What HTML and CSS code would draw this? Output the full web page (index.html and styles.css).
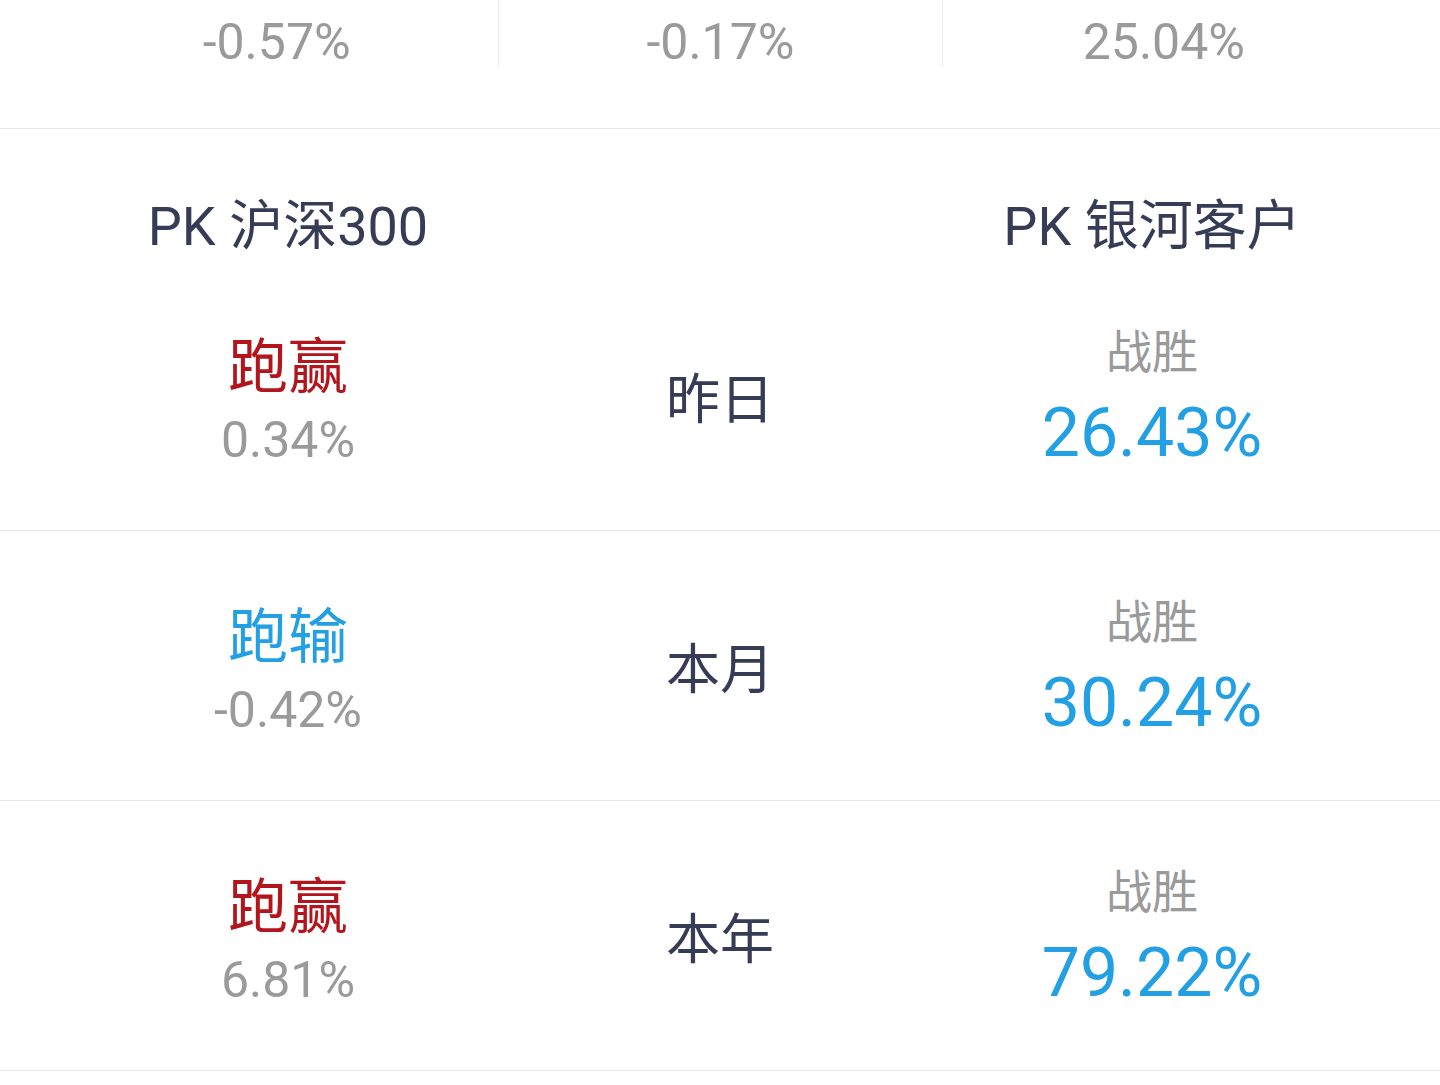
FILE: index.html
```html
<!DOCTYPE html>
<html lang="zh-CN">
<head>
<meta charset="utf-8">
<link rel="stylesheet" href="styles.css">
</head>
<body>
<div class="page">
  <section class="summary">
    <div class="summary-row">
      <div class="summary-cell">-0.57%</div>
      <div class="summary-cell">-0.17%</div>
      <div class="summary-cell">25.04%</div>
    </div>
  </section>

  <section class="pk">
    <div class="pk-head">
      <div class="col">PK 沪深300</div>
      <div class="col"></div>
      <div class="col">PK 银河客户</div>
    </div>

    <div class="pk-row">
      <div class="col index-side">
        <div class="result win">跑赢</div>
        <div class="diff">0.34%</div>
      </div>
      <div class="col period">昨日</div>
      <div class="col client-side">
        <div class="beat-label">战胜</div>
        <div class="beat-value">26.43%</div>
      </div>
    </div>

    <div class="pk-row">
      <div class="col index-side">
        <div class="result lose">跑输</div>
        <div class="diff">-0.42%</div>
      </div>
      <div class="col period">本月</div>
      <div class="col client-side">
        <div class="beat-label">战胜</div>
        <div class="beat-value">30.24%</div>
      </div>
    </div>

    <div class="pk-row">
      <div class="col index-side">
        <div class="result win">跑赢</div>
        <div class="diff">6.81%</div>
      </div>
      <div class="col period">本年</div>
      <div class="col client-side">
        <div class="beat-label">战胜</div>
        <div class="beat-value">79.22%</div>
      </div>
    </div>
  </section>
</div>
</body>
</html>
```

FILE: styles.css
```css
html, body {
  margin: 0;
  padding: 0;
  background: #ffffff;
}

body {
  font-family: Roboto, "Noto Sans CJK SC", sans-serif;
  width: 1440px;
  height: 1085px;
  overflow: hidden;
}

.summary {
  height: 128px;
  border-bottom: 1px solid #e6e6e6;
  padding: 0 55px;
}

.summary-row {
  display: grid;
  grid-template-columns: repeat(3, 1fr);
}

.summary-cell {
  height: 67px;
  box-sizing: border-box;
  padding-top: 16px;
  line-height: 52px;
  font-size: 50px;
  color: #9a9a9a;
  text-align: center;
}

.summary-cell + .summary-cell {
  border-left: 1px solid #ececec;
}

.pk-head,
.pk-row {
  display: grid;
  grid-template-columns: 576px 288px 576px;
}

.pk-head {
  height: 132px;
  box-sizing: border-box;
  padding-top: 68px;
}

.pk-head .col {
  line-height: 60px;
  font-size: 54px;
  color: #363c55;
}

.pk-row {
  height: 270px;
  box-sizing: border-box;
  border-bottom: 1px solid #e6e6e6;
  align-items: center;
}

.col {
  text-align: center;
}

.index-side {
  padding-top: 16px;
}

.client-side {
  padding-top: 6px;
}

.result {
  font-size: 60px;
  line-height: 72px;
}

.win {
  color: #b3151c;
}

.lose {
  color: #23a0e4;
}

.diff {
  font-size: 50px;
  line-height: 72px;
  color: #9a9a9a;
}

.period {
  font-size: 54px;
  color: #363c55;
}

.beat-label {
  font-size: 46px;
  line-height: 62px;
  color: #9a9a9a;
}

.beat-value {
  font-size: 68px;
  line-height: 88px;
  margin-top: 6px;
  color: #23a0e4;
}
```
